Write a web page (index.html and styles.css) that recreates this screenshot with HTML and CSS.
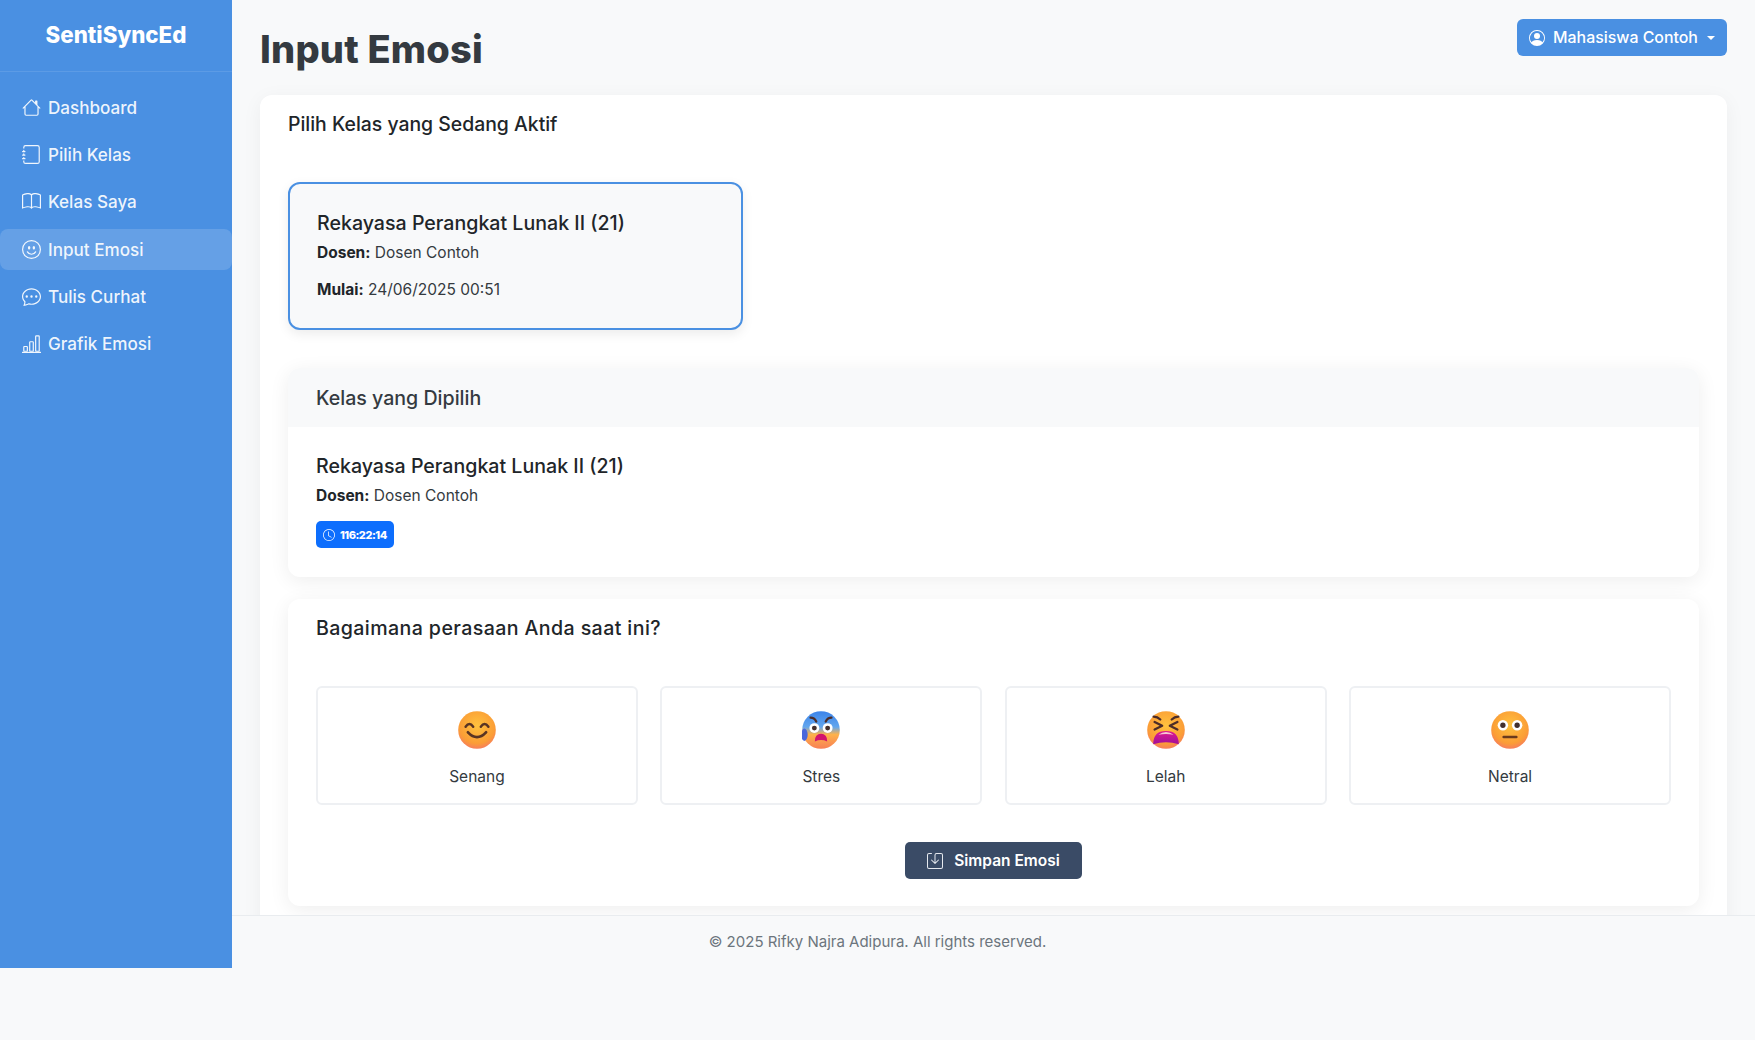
FILE: index.html
```html
<!DOCTYPE html>
<html lang="id">
<head>
<meta charset="utf-8">
<title>Input Emosi - SentiSyncEd</title>
<link rel="stylesheet" href="styles.css">
</head>
<body>
<div class="app">
  <aside class="sidebar">
    <div class="brand">SentiSyncEd</div>
    <nav class="nav">
      <a class="nav-item"><svg class="ico" viewBox="0 0 16 16"><path d="M8.707 1.5a1 1 0 0 0-1.414 0L.646 8.146a.5.5 0 0 0 .708.708L2 8.207V13.5A1.5 1.5 0 0 0 3.5 15h9a1.5 1.5 0 0 0 1.5-1.5V8.207l.646.647a.5.5 0 0 0 .708-.708L13 5.793V2.5a.5.5 0 0 0-.5-.5h-1a.5.5 0 0 0-.5.5v1.293zM13 7.207V13.5a.5.5 0 0 1-.5.5h-9a.5.5 0 0 1-.5-.5V7.207l5-5z"/></svg>Dashboard</a>
      <a class="nav-item"><svg class="ico" viewBox="0 0 16 16"><path d="M3 0h10a2 2 0 0 1 2 2v12a2 2 0 0 1-2 2H3a2 2 0 0 1-2-2v-1h1v1a1 1 0 0 0 1 1h10a1 1 0 0 0 1-1V2a1 1 0 0 0-1-1H3a1 1 0 0 0-1 1v1H1V2a2 2 0 0 1 2-2"/><path d="M1 5v-.5a.5.5 0 0 1 1 0V5h.5a.5.5 0 0 1 0 1h-2a.5.5 0 0 1 0-1zm0 3v-.5a.5.5 0 0 1 1 0V8h.5a.5.5 0 0 1 0 1h-2a.5.5 0 0 1 0-1zm0 3v-.5a.5.5 0 0 1 1 0v.5h.5a.5.5 0 0 1 0 1h-2a.5.5 0 0 1 0-1z"/></svg>Pilih Kelas</a>
      <a class="nav-item"><svg class="ico" viewBox="0 0 16 16"><path d="M1 2.828c.885-.37 2.154-.769 3.388-.893 1.33-.134 2.458.063 3.112.752v9.746c-.935-.53-2.12-.603-3.213-.493-1.18.12-2.37.461-3.287.811zm7.5-.141c.654-.689 1.782-.886 3.112-.752 1.234.124 2.503.523 3.388.893v9.923c-.918-.35-2.107-.692-3.287-.81-1.094-.111-2.278-.039-3.213.492zM8 1.783C7.015.936 5.587.81 4.287.94c-1.514.153-3.042.672-3.994 1.105A.5.5 0 0 0 0 2.5v11a.5.5 0 0 0 .707.455c.882-.4 2.303-.881 3.68-1.02 1.409-.142 2.59.087 3.223.877a.5.5 0 0 0 .78 0c.633-.79 1.814-1.019 3.222-.877 1.378.139 2.8.62 3.681 1.02A.5.5 0 0 0 16 13.5v-11a.5.5 0 0 0-.293-.455c-.952-.433-2.48-.952-3.994-1.105C10.413.809 8.985.936 8 1.783"/></svg>Kelas Saya</a>
      <a class="nav-item active"><svg class="ico" viewBox="0 0 16 16"><path d="M8 15A7 7 0 1 1 8 1a7 7 0 0 1 0 14m0 1A8 8 0 1 0 8 0a8 8 0 0 0 0 16"/><path d="M4.285 9.567a.5.5 0 0 1 .683.183A3.5 3.5 0 0 0 8 11.5a3.5 3.5 0 0 0 3.032-1.75.5.5 0 1 1 .866.5A4.5 4.5 0 0 1 8 12.5a4.5 4.5 0 0 1-3.898-2.25.5.5 0 0 1 .183-.683M7 6.5C7 7.328 6.552 8 6 8s-1-.672-1-1.5S5.448 5 6 5s1 .672 1 1.5m4 0c0 .828-.448 1.5-1 1.5s-1-.672-1-1.5S9.448 5 10 5s1 .672 1 1.5"/></svg>Input Emosi</a>
      <a class="nav-item"><svg class="ico" viewBox="0 0 16 16"><path d="M5 8a1 1 0 1 1-2 0 1 1 0 0 1 2 0m4 0a1 1 0 1 1-2 0 1 1 0 0 1 2 0m3 1a1 1 0 1 0 0-2 1 1 0 0 0 0 2"/><path d="m2.165 15.803.02-.004c1.83-.363 2.948-.842 3.468-1.105A9 9 0 0 0 8 15c4.418 0 8-3.134 8-7s-3.582-7-8-7-8 3.134-8 7c0 1.76.743 3.37 1.97 4.6a10.4 10.4 0 0 1-.524 2.318l-.003.011a11 11 0 0 1-.244.637c-.079.186.074.394.273.362a22 22 0 0 0 .693-.125m.8-3.108a1 1 0 0 0-.287-.801C1.618 10.83 1 9.468 1 8c0-3.192 3.004-6 7-6s7 2.808 7 6-3.004 6-7 6a8 8 0 0 1-2.088-.272 1 1 0 0 0-.711.074c-.387.196-1.24.57-2.634.893a11 11 0 0 0 .398-2"/></svg>Tulis Curhat</a>
      <a class="nav-item"><svg class="ico" viewBox="0 0 16 16"><path d="M4 11H2v3h2zm5-4H7v7h2zm5-5v12h-2V2zm-2-1a1 1 0 0 0-1 1v12a1 1 0 0 0 1 1h2a1 1 0 0 0 1-1V2a1 1 0 0 0-1-1zM6 7a1 1 0 0 1 1-1h2a1 1 0 0 1 1 1v7a1 1 0 0 1-1 1H7a1 1 0 0 1-1-1zm-5 4a1 1 0 0 1 1-1h2a1 1 0 0 1 1 1v3a1 1 0 0 1-1 1H2a1 1 0 0 1-1-1z"/><path d="M0 15h16v1H0z"/></svg>Grafik Emosi</a>
    </nav>
  </aside>
  <div class="content">
    <main class="main">
      <header class="topbar">
        <h1 class="page-title">Input Emosi</h1>
        <button class="user-btn"><svg class="ico" viewBox="0 0 16 16"><path d="M11 6a3 3 0 1 1-6 0 3 3 0 0 1 6 0"/><path fill-rule="evenodd" d="M0 8a8 8 0 1 1 16 0A8 8 0 0 1 0 8m8-7a7 7 0 0 0-5.468 11.37C3.242 11.226 4.805 10 8 10s4.757 1.225 5.468 2.37A7 7 0 0 0 8 1"/></svg>Mahasiswa Contoh<span class="caret"></span></button>
      </header>
      <section class="panel">
        <h2 class="panel-title">Pilih Kelas yang Sedang Aktif</h2>
        <div class="class-card">
          <h3 class="class-name">Rekayasa Perangkat Lunak II (21)</h3>
          <p class="meta"><b>Dosen:</b> Dosen Contoh</p>
          <p class="meta"><b>Mulai:</b> 24/06/2025 00:51</p>
        </div>
        <div class="sub-card">
          <div class="sub-head">Kelas yang Dipilih</div>
          <div class="sub-body">
            <h3 class="class-name">Rekayasa Perangkat Lunak II (21)</h3>
            <p class="meta"><b>Dosen:</b> Dosen Contoh</p>
            <span class="timer"><svg class="ico" viewBox="0 0 16 16"><path d="M8 3.5a.5.5 0 0 0-1 0V9a.5.5 0 0 0 .252.434l3.5 2a.5.5 0 0 0 .496-.868L8 8.71z"/><path d="M8 16A8 8 0 1 0 8 0a8 8 0 0 0 0 16m7-8A7 7 0 1 1 1 8a7 7 0 0 1 14 0"/></svg>116:22:14</span>
          </div>
        </div>
        <div class="sub-card feel">
          <h2 class="feel-title">Bagaimana perasaan Anda saat ini?</h2>
          <svg class="defs" width="0" height="0" aria-hidden="true"><defs>
            <radialGradient id="face" cx=".5" cy=".38" r=".68"><stop offset="0" stop-color="#ffc23e"/><stop offset=".7" stop-color="#fb9d36"/><stop offset="1" stop-color="#f5726c"/></radialGradient>
            <linearGradient id="cold" x1="0" y1="0" x2="0" y2="1"><stop offset="0" stop-color="#3c84ea"/><stop offset=".42" stop-color="#62a6ee"/><stop offset=".62" stop-color="#fdb24a"/><stop offset="1" stop-color="#f87f55"/></linearGradient>
            <linearGradient id="mouth" x1="0" y1="0" x2="0" y2="1"><stop offset="0" stop-color="#e0178f"/><stop offset="1" stop-color="#a0119a"/></linearGradient>
          </defs></svg>
          <div class="moods">
            <div class="mood">
              <svg class="emoji" viewBox="0 0 40 40"><circle cx="20" cy="20" r="19.800" fill="url(#face)"/><path d="M8 16.500q4-5.500 8 0M24 16.500q4-5.500 8 0" class="eye-line"/><path d="M10.500 22.500q9.500 10 19 0" class="smile"/></svg>
              <span class="mood-label">Senang</span>
            </div>
            <div class="mood">
              <svg class="emoji" viewBox="0 0 40 40"><circle cx="20" cy="20" r="19.800" fill="url(#cold)"/><ellipse cx="2.500" cy="25" rx="3.500" ry="6.500" fill="#4a68dc"/><path d="M9 7q4 0 6 4M31 7q-4 0-6 4" class="brow"/><circle cx="13" cy="18" r="5.200" fill="#fff"/><circle cx="27" cy="18" r="5.200" fill="#fff"/><circle cx="13" cy="18" r="2.600" fill="#43302e"/><circle cx="27" cy="18" r="2.600" fill="#43302e"/><path d="M13.500 32q0-8 6.500-8t6.500 8q-6.500-3-13 0z" fill="#d3146e"/></svg>
              <span class="mood-label">Stres</span>
            </div>
            <div class="mood">
              <svg class="emoji" viewBox="0 0 40 40"><circle cx="20" cy="20" r="19.800" fill="url(#face)"/><path d="M7 6q4 0 7 3M33 6q-4 0-7 3M8 11.500l8 4-8 4M32 11.500l-8 4 8 4" class="brow"/><path d="M6.500 35q0-14 13.500-14t13.500 14q-13.500-4-27 0z" fill="url(#mouth)"/><path d="M12 25q8-6 16 0q-8-1.500-16 0z" fill="#f6c9d2"/></svg>
              <span class="mood-label">Lelah</span>
            </div>
            <div class="mood">
              <svg class="emoji" viewBox="0 0 40 40"><circle cx="20" cy="20" r="19.800" fill="url(#face)"/><circle cx="12.500" cy="15" r="5.500" fill="#fff"/><circle cx="27.500" cy="15" r="5.500" fill="#fff"/><circle cx="12.500" cy="15" r="2.800" fill="#43302e"/><circle cx="27.500" cy="15" r="2.800" fill="#43302e"/><rect x="12" y="26" width="16" height="2.600" rx="1.300" fill="#6a3a1c"/></svg>
              <span class="mood-label">Netral</span>
            </div>
          </div>
          <div class="save-row">
            <button class="save-btn"><svg class="ico" viewBox="0 0 16 16"><path d="M2 1a1 1 0 0 0-1 1v12a1 1 0 0 0 1 1h12a1 1 0 0 0 1-1V2a1 1 0 0 0-1-1H9.500a1 1 0 0 0-1 1v7.293l2.646-2.647a.5.5 0 0 1 .708.708l-3.500 3.500a.5.5 0 0 1-.708 0l-3.500-3.500a.5.5 0 1 1 .708-.708L7.500 9.293V2a2 2 0 0 1 2-2H14a2 2 0 0 1 2 2v12a2 2 0 0 1-2 2H2a2 2 0 0 1-2-2V2a2 2 0 0 1 2-2h2.500a.5.5 0 0 1 0 1z"/></svg>Simpan Emosi</button>
          </div>
        </div>
      </section>
    </main>
    <footer class="footer">© 2025 Rifky Najra Adipura. All rights reserved.</footer>
  </div>
</div>
</body>
</html>
```
FILE: styles.css
```css
* { box-sizing: border-box; }
html, body { margin: 0; height: 100%; overflow: hidden; }
body {
  font-family: "Inter", "Noto Sans", "Liberation Sans", sans-serif;
  background: #f8f9fa;
  color: #212529;
}
h1, h2, h3, p { margin: 0; }
.app { display: flex; align-items: flex-start; height: 1040px; }
.ico { fill: currentColor; flex: none; display: block; }

.sidebar {
  width: 232px;
  height: 968px;
  flex: none;
  background: #4a90e2;
  color: #fff;
}
.brand {
  height: 72px;
  display: flex;
  align-items: center;
  justify-content: center;
  padding-bottom: 2px;
  font-size: 22.300px;
  font-weight: 800;
  border-bottom: 1px solid rgba(255,255,255,.1);
}
.nav { padding-top: 15px; display: flex; flex-direction: column; gap: 6px; }
.nav-item {
  height: 41.200px;
  display: flex;
  align-items: center;
  gap: 7px;
  padding-left: 22px;
  font-size: 17.100px;
  font-weight: 500;
  color: rgba(255,255,255,.92);
  border-radius: 0 8px 8px 0;
}
.nav-item .ico { width: 19px; height: 19px; }
.nav-item.active { background: rgba(255,255,255,.15); border-radius: 8px; }

.content { flex: 1; min-width: 0; }
.main { height: 916px; padding: 18px 28px 0; overflow: hidden; border-bottom: 1px solid #e9ecef; }
.topbar { display: flex; justify-content: space-between; align-items: flex-start; height: 77px; }
.page-title { font-size: 38px; font-weight: 800; color: #343a40; line-height: 46px; margin-top: 8px; letter-spacing: .2px; }
.user-btn {
  height: 37px;
  width: 210px;
  margin-top: 1px;
  display: flex;
  align-items: center;
  justify-content: center;
  gap: 8px;
  border: 0;
  border-radius: 6px;
  background: #4a90e2;
  color: #fff;
  font: 500 15.900px "Inter", sans-serif;
}
.user-btn .ico { width: 16px; height: 16px; }
.caret { border-top: 4.500px solid #fff; border-left: 4.500px solid transparent; border-right: 4.500px solid transparent; margin-left: 1px; }

.panel {
  background: #fff;
  border-radius: 12px 12px 0 0;
  box-shadow: 0 4px 20px rgba(0,0,0,.05);
  padding: 16px 28px 0;
  height: 900px;
}
.panel-title { font-size: 19.400px; font-weight: 500; line-height: 26px; color: #212529; }
.class-card {
  width: 455px;
  height: 148px;
  margin-top: 45px;
  padding: 25px 27px 0;
  background: #f8f9fa;
  border: 2px solid #4a90e2;
  border-radius: 12px;
  box-shadow: 0 4px 12px rgba(0,0,0,.08);
}
.class-name { font-size: 19.600px; font-weight: 500; line-height: 28px; color: #212529; }
.meta { font-size: 15.500px; line-height: 24px; margin-top: 4px; color: #343a40; }
.meta b { font-weight: 700; color: #212529; }
.class-card .meta + .meta { margin-top: 13px; }

.sub-card {
  margin-top: 38px;
  height: 209px;
  background: #fff;
  border-radius: 12px;
  box-shadow: 0 4px 20px rgba(0,0,0,.07);
  overflow: hidden;
}
.sub-head {
  height: 59px;
  padding: 0 28px;
  display: flex;
  align-items: center;
  background: #f8f9fa;
  font-size: 19.600px;
  font-weight: 500;
  color: #343a40;
}
.sub-body { padding: 25px 28px 0; }
.sub-body .meta { margin-top: 4px; }
.timer {
  display: inline-flex;
  align-items: center;
  gap: 5px;
  height: 27px;
  width: 78px;
  margin-top: 13px;
  padding-left: 7px;
  background: #0d6efd;
  color: #fff;
  border-radius: 5px;
  font-size: 11px;
  font-weight: 800;
  letter-spacing: -.5px;
}
.timer .ico { width: 12px; height: 12px; }

.feel { margin-top: 22px; height: 307px; padding: 16px 28px 0; }
.feel-title { font-size: 19.600px; font-weight: 500; line-height: 26px; color: #212529; letter-spacing: .4px; }
.defs { position: absolute; }
.moods { margin-top: 45px; display: grid; grid-template-columns: repeat(4, 1fr); gap: 22.500px; }
.mood {
  height: 119px;
  padding-top: 23px;
  display: flex;
  flex-direction: column;
  align-items: center;
  border: 2px solid #eef0f3;
  border-radius: 6px;
  background: #fff;
}
.emoji { width: 38px; height: 38px; display: block; }
.eye-line, .smile, .brow { fill: none; stroke: #5a3423; stroke-linecap: round; stroke-linejoin: round; }
.eye-line { stroke-width: 2.600; }
.smile { stroke-width: 3; }
.brow { stroke-width: 2.400; stroke: #4c2c28; }
.mood-label { margin-top: 16px; font-size: 15.500px; line-height: 24px; color: #343a40; }
.save-row { display: flex; justify-content: center; margin-top: 37px; }
.save-btn {
  width: 177px;
  height: 37px;
  display: flex;
  align-items: center;
  justify-content: center;
  gap: 11px;
  border: 0;
  border-radius: 5px;
  background: #3a4b66;
  color: #fff;
  font: 600 15.500px "Inter", sans-serif;
}
.save-btn .ico { width: 16px; height: 16px; color: #e6e9ef; }

.footer {
  height: 51px;
  padding-right: 232px;
  display: flex;
  align-items: center;
  justify-content: center;
  font-size: 15px;
  color: #6c757d;
}
```
